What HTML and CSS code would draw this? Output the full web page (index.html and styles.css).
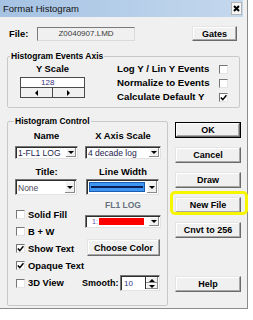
FILE: index.html
```html
<!DOCTYPE html>
<html>
<head>
    <title>Format Histogram</title>
    <link rel="stylesheet" href="styles.css">
</head>
<body>
<div class="window">
    <div class="titlebar">
        <span class="title">Format Histogram</span>
        <span class="close">
            <svg width="7" height="7" viewBox="0 0 7 7"><path d="M1 1 L6 6 M6 1 L1 6" stroke="#000" stroke-width="2"/></svg>
        </span>
    </div>

    <div class="file-row">
        <span class="label file-label">File:</span>
        <div class="file-box">Z0040907.LMD</div>
        <button class="btn gates">Gates</button>
    </div>

    <!-- Events axis group -->
    <fieldset class="group events">
        <legend>Histogram Events Axis</legend>
        <div class="events-body">
            <div class="yscale">
                <div class="label centered">Y Scale</div>
                <div class="yscale-box">
                    <div class="yscale-value">128</div>
                    <div class="hscroll">
                        <span class="hbtn"><i class="tri-left"></i></span>
                        <span class="hbtn"><i class="tri-right"></i></span>
                    </div>
                </div>
            </div>
            <div class="event-opts">
                <div class="opt-row"><span class="label opt-label">Log Y / Lin Y Events</span><span class="check"></span></div>
                <div class="opt-row"><span class="label opt-label">Normalize to Events</span><span class="check"></span></div>
                <div class="opt-row">
                    <span class="label opt-label">Calculate Default Y</span>
                    <span class="check"><svg width="7" height="7" viewBox="0 0 7 7"><polyline points="0.8,3.4 2.8,5.6 6.4,1.2" fill="none" stroke="#000" stroke-width="1.5"/></svg></span>
                </div>
            </div>
        </div>
    </fieldset>

    <div class="lower">
        <!-- Histogram control group -->
        <fieldset class="group control">
            <legend>Histogram Control</legend>
            <div class="control-body">
                <div class="ctl-row labels-row">
                    <div class="label cell-left centered">Name</div>
                    <div class="label cell-right centered">X Axis Scale</div>
                </div>
                <div class="ctl-row combos-row">
                    <div class="combo cell-left"><span class="combo-text">1-FL1 LOG</span><span class="combo-arrow"><i class="tri-down"></i></span></div>
                    <div class="combo cell-right"><span class="combo-text">4 decade log</span><span class="combo-arrow"><i class="tri-down"></i></span></div>
                </div>
                <div class="ctl-row labels-row second">
                    <div class="label cell-left centered">Title:</div>
                    <div class="label cell-right centered">Line Width</div>
                </div>
                <div class="ctl-row combos-row tall">
                    <div class="combo cell-left"><span class="combo-text gray">None</span><span class="combo-arrow"><i class="tri-down"></i></span></div>
                    <div class="combo cell-right shifted">
                        <span class="line-sample"><i class="line-stroke"></i></span>
                        <span class="combo-arrow"><i class="tri-down"></i></span>
                    </div>
                </div>

                <div class="split">
                    <div class="checks">
                        <div class="check-row"><span class="check"></span><span class="label">Solid Fill</span></div>
                        <div class="check-row"><span class="check"></span><span class="label">B + W</span></div>
                        <div class="check-row">
                            <span class="check"><svg width="7" height="7" viewBox="0 0 7 7"><polyline points="0.8,3.4 2.8,5.6 6.4,1.2" fill="none" stroke="#000" stroke-width="1.5"/></svg></span>
                            <span class="label">Show Text</span>
                        </div>
                        <div class="check-row">
                            <span class="check"><svg width="7" height="7" viewBox="0 0 7 7"><polyline points="0.8,3.4 2.8,5.6 6.4,1.2" fill="none" stroke="#000" stroke-width="1.5"/></svg></span>
                            <span class="label">Opaque Text</span>
                        </div>
                    </div>
                    <div class="color-col">
                        <div class="label series-name">FL1 LOG</div>
                        <div class="combo color-combo">
                            <span class="color-index">1:</span>
                            <span class="color-swatch"></span>
                            <span class="combo-arrow"><i class="tri-down"></i></span>
                        </div>
                        <button class="btn choose">Choose Color</button>
                    </div>
                </div>

                <div class="bottom-row">
                    <div class="check-row view3d"><span class="check"></span><span class="label">3D View</span></div>
                    <span class="label smooth-label">Smooth:</span>
                    <div class="spin">
                        <span class="spin-value">10</span>
                        <span class="spin-btns">
                            <span class="spin-btn"><i class="tri-up"></i></span>
                            <span class="spin-btn"><i class="tri-down"></i></span>
                        </span>
                    </div>
                </div>
            </div>
        </fieldset>

        <div class="actions">
            <button class="btn default">OK</button>
            <button class="btn">Cancel</button>
            <button class="btn">Draw</button>
            <button class="btn">New File</button>
            <button class="btn">Cnvt to 256</button>
            <button class="btn help">Help</button>
        </div>
    </div>

    <div class="highlight"></div>
</div>
</body>
</html>
```

FILE: styles.css
```css
body {
    margin: 0;
    background-color: white;
    font-family: "Liberation Sans", Arial, sans-serif;
    font-size: 9px;
    color: black;
}

.window {
    position: relative;
    box-sizing: border-box;
    width: 248px;
    height: 309px;
    background-color: #f0f0f0;
    border-right: 1px solid #8c8c8c;
    border-bottom: 1px solid #8c8c8c;
}

/* Title bar */
.titlebar {
    box-sizing: border-box;
    width: 243px;
    height: 17px;
    display: flex;
    align-items: center;
    justify-content: space-between;
    padding: 0 1px 0 3px;
    background: linear-gradient(to right, #a5c2e3, #c4d8ed);
}

.title {
    font-size: 9.5px;
    color: #141414;
}

.close {
    box-sizing: border-box;
    width: 11px;
    height: 13px;
    display: flex;
    align-items: center;
    justify-content: center;
    background-color: #f6f6f6;
    border: 1px solid #b4b4b4;
}

.label {
    font-size: 9.4px;
    font-weight: bold;
    line-height: 10px;
    white-space: nowrap;
}

.centered {
    text-align: center;
}

/* Buttons */
.btn {
    box-sizing: border-box;
    height: 16px;
    padding: 0;
    font-family: inherit;
    font-size: 9px;
    font-weight: bold;
    color: black;
    background-color: #f0f0f0;
    border: 1px solid;
    border-color: #e4e4e4 #6a6a6a #6a6a6a #e4e4e4;
    box-shadow: inset -1px -1px #a8a8a8, inset 1px 1px #ffffff;
}

.btn.default {
    border-color: #000;
    box-shadow: inset -1px -1px #6a6a6a, inset 1px 1px #ffffff, inset -2px -2px #a8a8a8;
}

/* File row */
.file-row {
    display: flex;
    align-items: center;
    height: 15px;
    margin-top: 9px;
    padding: 0 10px 0 9px;
}

.file-label {
    width: 28px;
}

.file-box {
    box-sizing: border-box;
    width: 98px;
    height: 14px;
    border: 1px solid;
    border-color: #7a7a7a #dadada #dadada #7a7a7a;
    font-size: 8px;
    line-height: 12px;
    text-align: center;
    color: #3a3a3a;
}

.gates {
    margin-left: auto;
    width: 45px;
    height: 15px;
}

/* Group boxes */
.group {
    box-sizing: border-box;
    margin: 0;
    padding: 0;
    min-width: 0;
    border: 1px solid #c9c9c9;
    border-radius: 2px;
}

.group legend {
    padding: 0 1px;
    font-size: 8.5px;
    font-weight: bold;
    line-height: 10px;
}

.events {
    width: 233px;
    margin: 10px 0 0 7px;
}

.events legend {
    margin-left: 2px;
}

.events-body {
    display: flex;
    height: 46px;
    padding-left: 12px;
}

.yscale {
    width: 65px;
}

.yscale .label {
    margin-top: 3px;
}

.yscale-box {
    margin-top: 3px;
    border: 1px solid #4a4a4a;
}

.yscale-value {
    height: 9px;
    padding-left: 20px;
    background-color: white;
    border-bottom: 1px solid #4a4a4a;
    font-size: 8px;
    line-height: 9px;
    color: #3b2f7a;
}

.hscroll {
    display: flex;
    height: 9px;
}

.hbtn {
    flex: 1;
    display: flex;
    align-items: center;
    justify-content: center;
    background-color: #f0f0f0;
}

.hbtn:first-child {
    border-right: 1px solid #4a4a4a;
}

.tri-left, .tri-right, .tri-up, .tri-down {
    display: block;
    width: 0;
    height: 0;
}

.tri-left {
    border-top: 3px solid transparent;
    border-bottom: 3px solid transparent;
    border-right: 3px solid #000;
}

.tri-right {
    border-top: 3px solid transparent;
    border-bottom: 3px solid transparent;
    border-left: 3px solid #000;
}

.tri-down {
    border-left: 3px solid transparent;
    border-right: 3px solid transparent;
    border-top: 3px solid #000;
}

.tri-up {
    border-left: 3px solid transparent;
    border-right: 3px solid transparent;
    border-bottom: 3px solid #000;
}

.event-opts {
    margin-left: 32px;
    padding-top: 1px;
}

.opt-row {
    display: flex;
    align-items: center;
    height: 14px;
}

.opt-label {
    width: 102px;
    font-size: 9.7px;
}

/* Checkboxes */
.check {
    box-sizing: border-box;
    width: 9px;
    height: 9px;
    display: flex;
    align-items: center;
    justify-content: center;
    background-color: white;
    border: 1px solid;
    border-color: #777 #e4e4e4 #e4e4e4 #777;
}

/* Lower part */
.lower {
    display: flex;
    margin-top: 8px;
    padding-left: 7px;
}

.control {
    width: 161px;
}

.control legend {
    margin-left: 6px;
}

.control-body {
    height: 174px;
    padding-left: 7px;
}

.ctl-row {
    display: flex;
    gap: 7px;
}

.cell-left {
    width: 63px;
}

.cell-right {
    width: 76px;
}

.labels-row {
    margin-top: 5px;
}

.labels-row.second {
    margin-top: 8px;
}

.combos-row {
    margin-top: 5px;
    height: 13px;
}

.combos-row.tall {
    margin-top: 2px;
    height: 16px;
}

.combo {
    box-sizing: border-box;
    display: flex;
    background-color: white;
    border: 1px solid;
    border-color: #767676 #e2e2e2 #e2e2e2 #767676;
    box-shadow: inset 1px 1px #2e2e2e;
}

.combo-text {
    flex: 1;
    padding: 1px 0 0 2px;
    font-size: 8.5px;
    line-height: 10px;
    color: #1c1c4e;
    white-space: nowrap;
    overflow: hidden;
}

.combo-text.gray {
    color: #4a4a5a;
    padding-top: 3px;
}

.combo-arrow {
    width: 10px;
    margin: 1px;
    display: flex;
    align-items: center;
    justify-content: center;
    background-color: #f0f0f0;
    box-shadow: inset -1px -1px #8a8a8a, inset 1px 1px #ffffff;
}

.combos-row.tall .cell-left {
    width: 62px;
}

.combo.shifted {
    width: 73px;
    margin-left: 2px;
}

.line-sample {
    flex: 1;
    margin: 2px 1px 2px 2px;
    display: flex;
    align-items: center;
    background-color: #3d96f2;
    border: 1px solid #1b5cb0;
}

.line-stroke {
    display: block;
    flex: 1;
    height: 2px;
    margin: 0 1px;
    background-color: #0c1d55;
}

.split {
    display: flex;
    height: 79px;
}

.checks {
    width: 70px;
    padding-top: 11px;
}

.check-row {
    display: flex;
    align-items: center;
    height: 17px;
}

.check-row .check {
    margin: 0 3px 0 1px;
}

.color-col {
    width: 76px;
}

.series-name {
    margin-top: 5px;
    font-size: 8.5px;
    text-align: center;
    color: #66717d;
}

.color-combo {
    height: 13px;
    margin-top: 5px;
    align-items: stretch;
}

.color-index {
    margin: 2px 0 0 6px;
    font-size: 7px;
    line-height: 8px;
    color: #5a4fa8;
}

.color-swatch {
    flex: 1;
    margin: 2px 4px 2px 1px;
    background-color: #ff0000;
}

.choose {
    width: 73px;
    height: 17px;
    margin: 11px 0 0 2px;
}

.bottom-row {
    display: flex;
    align-items: center;
    height: 16px;
    margin-top: 1px;
}

.view3d {
    width: 67px;
}

.smooth-label {
    width: 38px;
    font-size: 9px;
}

.spin {
    box-sizing: border-box;
    display: flex;
    width: 40px;
    height: 16px;
    background-color: white;
    border: 1px solid;
    border-color: #767676 #e2e2e2 #e2e2e2 #767676;
    box-shadow: inset 1px 1px #2e2e2e;
}

.spin-value {
    flex: 1;
    padding: 3px 0 0 3px;
    font-size: 8px;
    line-height: 9px;
    color: #2b3a8a;
}

.spin-btns {
    display: flex;
    flex-direction: column;
    width: 12px;
    margin: 1px;
    border-left: 1px solid #2e2e2e;
}

.spin-btn {
    flex: 1;
    display: flex;
    align-items: center;
    justify-content: center;
    background-color: #f0f0f0;
    box-shadow: inset -1px -1px #8a8a8a, inset 1px 1px #ffffff;
}

/* Right column buttons */
.actions {
    display: flex;
    flex-direction: column;
    gap: 9px;
    width: 66px;
    margin-left: 7px;
    padding-top: 6px;
}

.actions .help {
    margin-top: 29px;
}

/* Yellow annotation over New File */
.highlight {
    position: absolute;
    left: 170px;
    top: 191px;
    width: 72px;
    height: 18px;
    border: 3px solid #f6f600;
    border-radius: 5px;
}
```
